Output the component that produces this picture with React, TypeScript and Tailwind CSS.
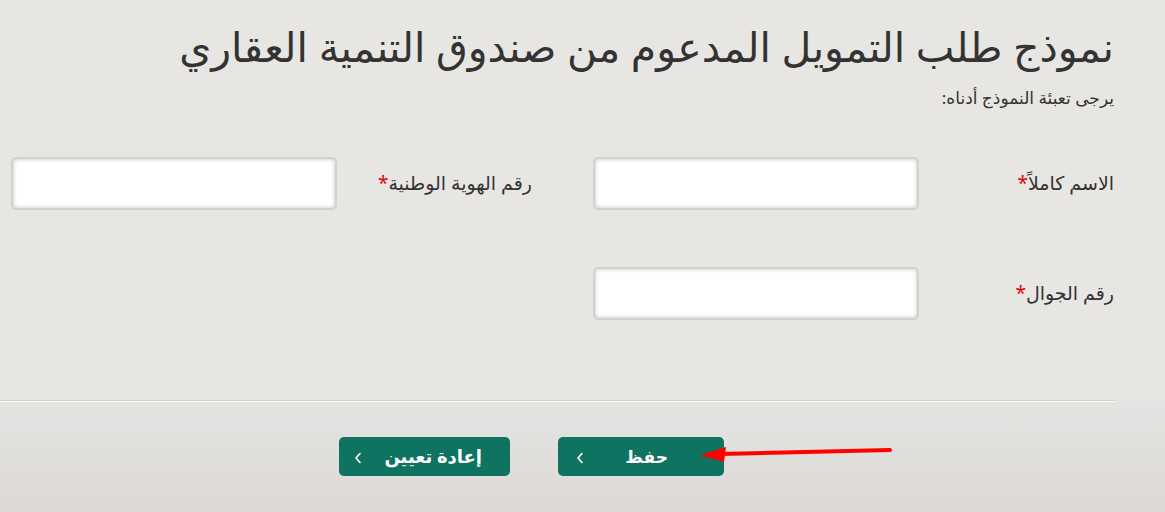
import React from "react";

const font = { fontFamily: '"Noto Sans", "DejaVu Sans", sans-serif' };

function Chevron() {
  return (
    <svg width="8" height="12" viewBox="0 0 8 12" className="shrink-0 mt-[3px]">
      <path d="M6 1.5 L2 6 L6 10.5" fill="none" stroke="#ffffff" strokeWidth="1.6" strokeLinecap="round" strokeLinejoin="round" />
    </svg>
  );
}

function Field({ label }: { label: string }) {
  return (
    <div className="flex items-center w-[520px]">
      <div className="w-[195px] shrink-0 text-[19px] text-[#333]">
        {label}
        <span className="text-[#e00000]">*</span>
      </div>
      <div className="w-[326px] h-[53px] shrink-0 rounded-[5px] border-2 border-[#d2d1cf] bg-white shadow-[inset_0_0_4px_rgba(0,0,0,0.25)]" />
    </div>
  );
}

export default function App() {
  return (
    <div dir="rtl" style={font} className="w-[1165px] h-[512px] bg-[#e8e6e3] flex flex-col overflow-hidden">
      <div className="pr-[51px] pl-[13px] pt-[16px]">
        <h1 className="text-[41px] leading-[60px] text-[#333] font-normal whitespace-nowrap">
          نموذج طلب التمويل المدعوم من صندوق التنمية العقاري
        </h1>
        <p className="text-[17px] text-[#333] mt-[9px]">يرجى تعبئة النموذج أدناه:</p>
      </div>
      <div className="pr-[51px] pl-[13px] mt-[46px] flex flex-col gap-[57px]">
        <div className="flex gap-[62px]">
          <Field label="الاسم كاملاً" />
          <Field label="رقم الهوية الوطنية" />
        </div>
        <div className="flex gap-[62px]">
          <Field label="رقم الجوال" />
        </div>
      </div>
      <div className="mt-auto h-[112px] relative bg-gradient-to-b from-[#e5e4e2] to-[#dcd9d6]">
        <div className="mr-[51px] h-[2px] border-t border-[#cfccc8] bg-white/80" />
        <div className="flex gap-[48px] pr-[441px] pt-[35px]">
          <button className="w-[166px] h-[39px] rounded-[5px] bg-[#0e7461] text-white text-[17px] font-bold flex items-center justify-between pr-[56px] pl-[18px]">
            <span>حفظ</span>
            <Chevron />
          </button>
          <button className="w-[171px] h-[39px] rounded-[5px] bg-[#0e7461] text-white text-[18px] font-bold flex items-center justify-between pr-[28px] pl-[15px]">
            <span>إعادة تعيين</span>
            <Chevron />
          </button>
        </div>
        <svg className="absolute left-[698px] top-[44px]" width="196" height="20" viewBox="0 0 196 20">
          <line x1="192" y1="6" x2="22" y2="10" stroke="#ff0000" strokeWidth="4" strokeLinecap="round" />
          <polygon points="2,11 28,3 26,18" fill="#ff0000" />
        </svg>
      </div>
    </div>
  );
}
